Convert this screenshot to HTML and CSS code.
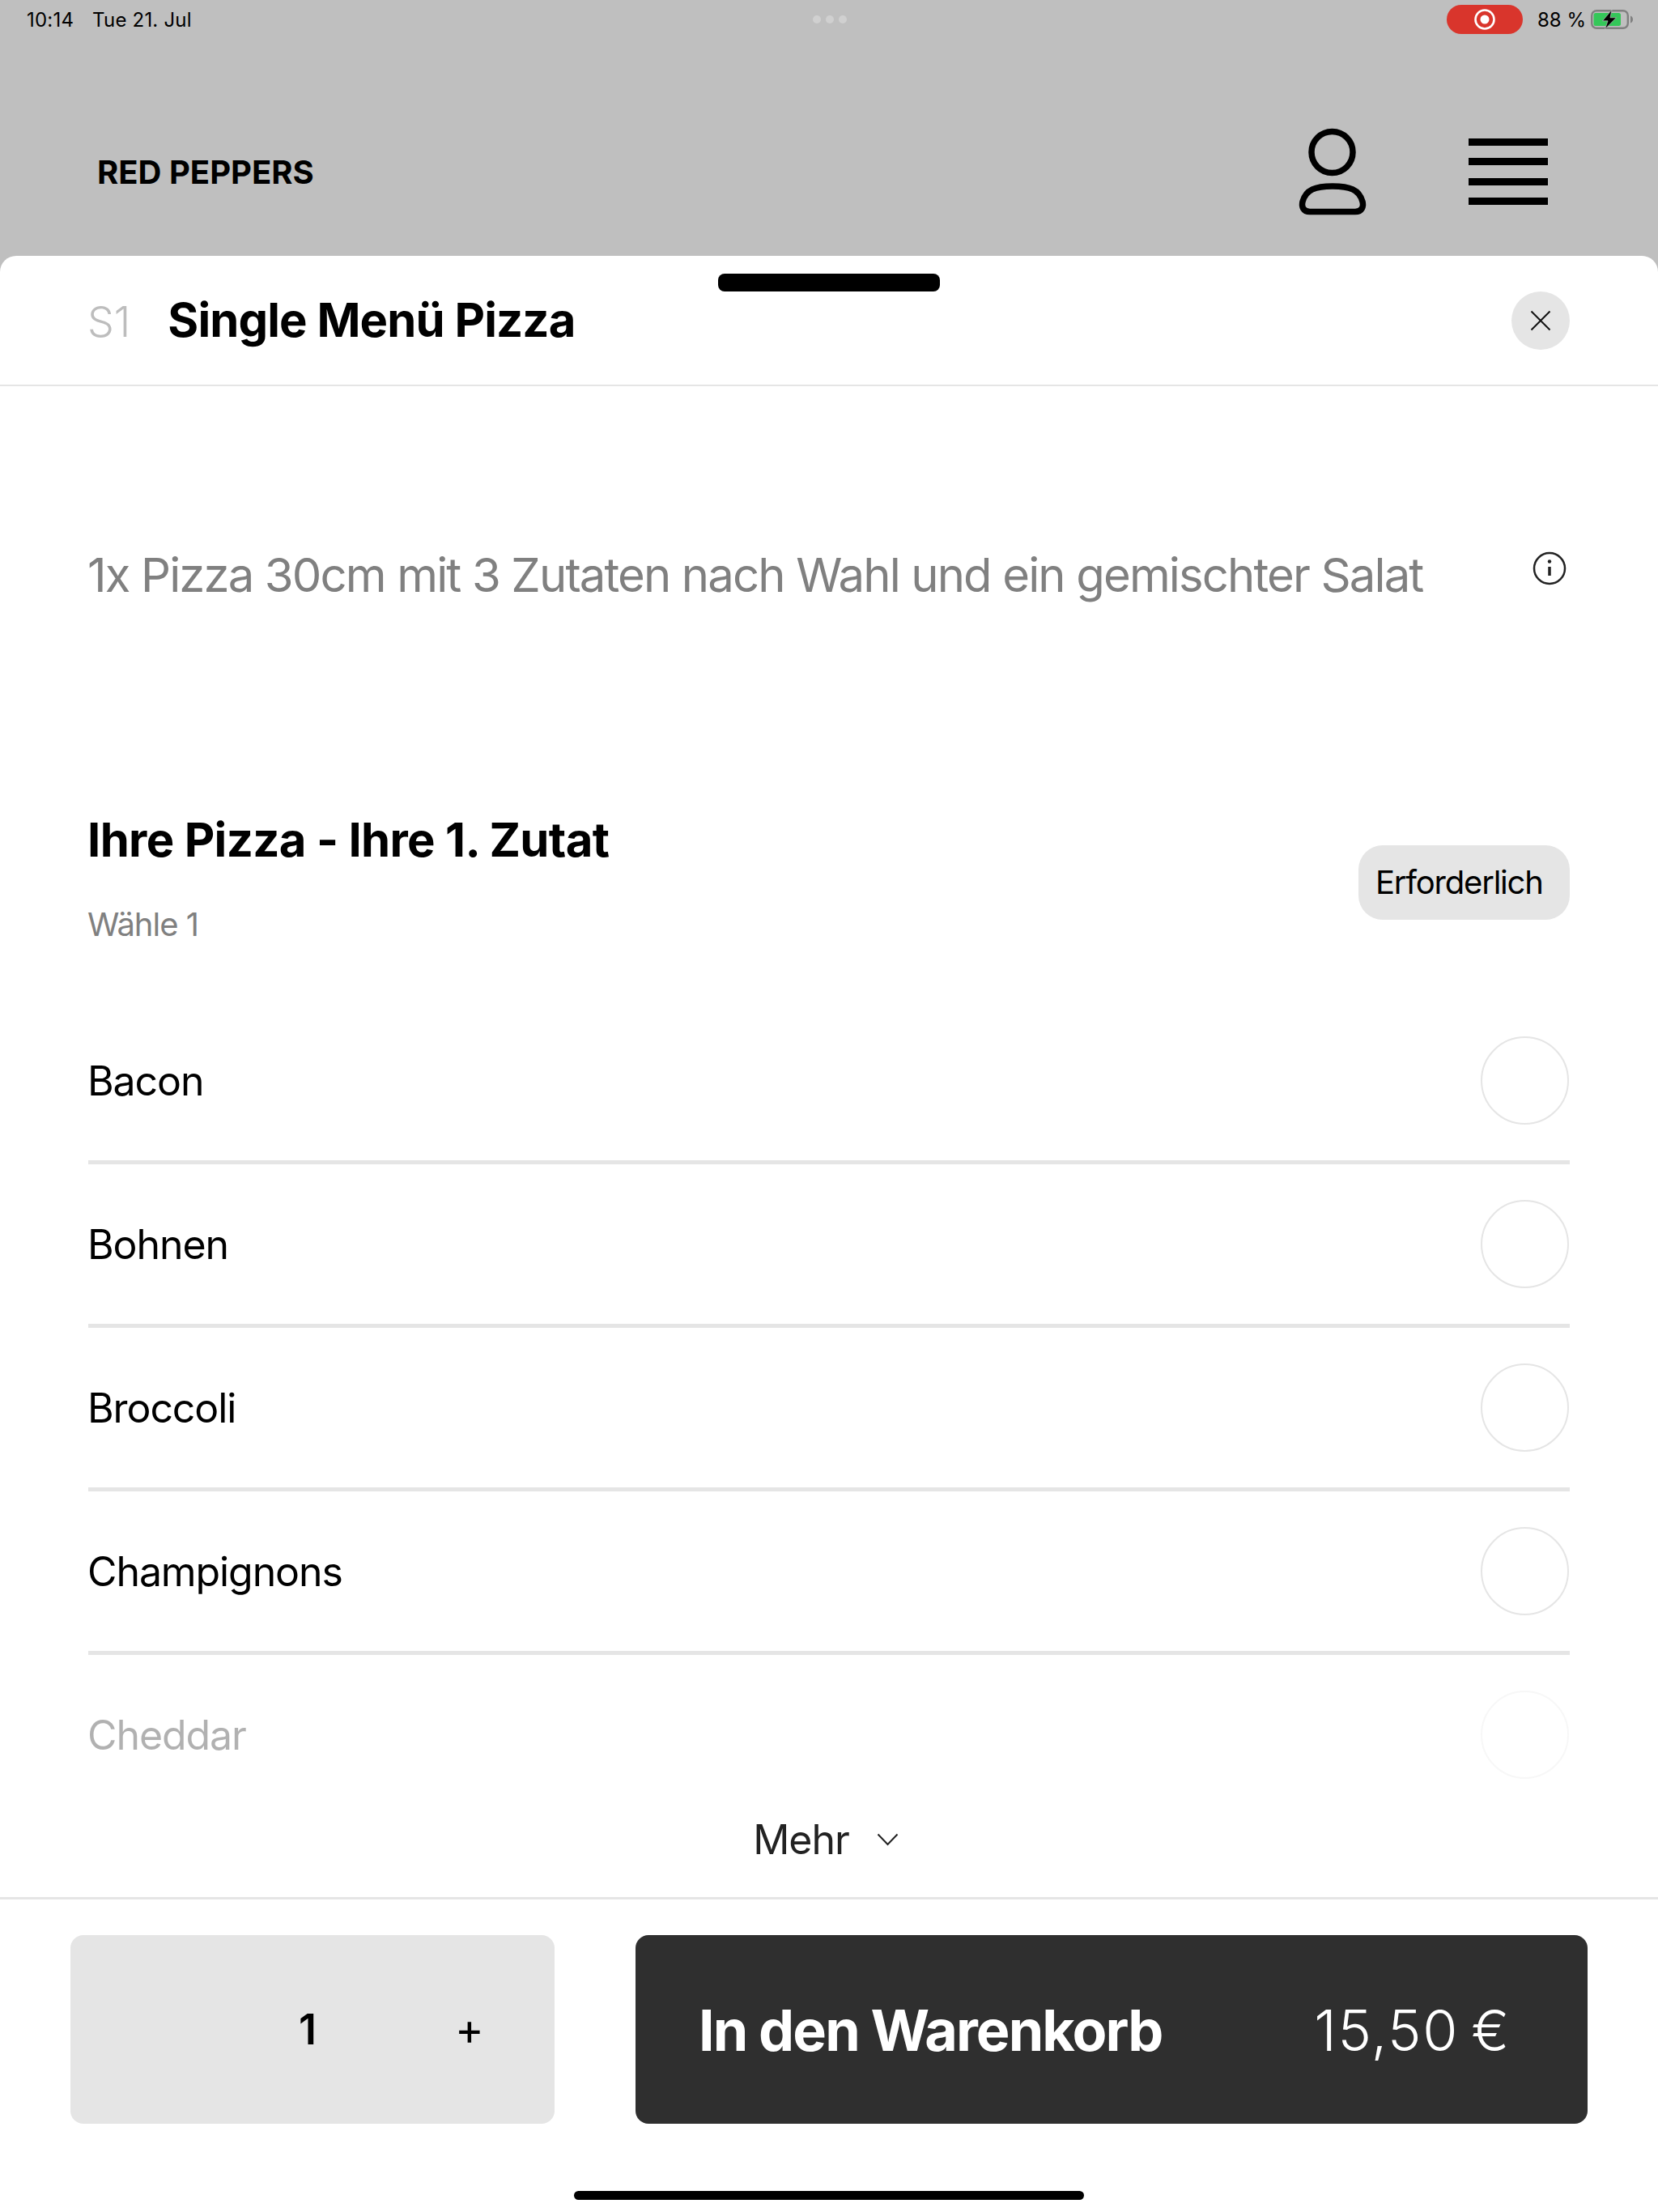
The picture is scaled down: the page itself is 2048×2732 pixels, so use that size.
FILE: index.html
```html
<!DOCTYPE html>
<html lang="de">
  <head>
    <meta charset="utf-8">
    <title>Red Peppers</title>
    <link rel="stylesheet" href="styles.css">
  </head>
  <body>
    <div class="backdrop">
      <div class="status-bar">
        <div class="status-left"><span>10:14</span><span>Tue 21. Jul</span></div>
        <div class="status-dots"><i></i><i></i><i></i></div>
        <div class="status-right">
          <span class="rec-pill">
            <svg width="26" height="26" viewBox="0 0 26 26"><circle cx="13" cy="13" r="11.5" fill="none" stroke="#fff" stroke-width="2.6"/><circle cx="13" cy="13" r="5.5" fill="#fff"/></svg>
          </span>
          <span class="battery-text">88 %</span>
          <svg class="battery" width="52" height="24" viewBox="0 0 52 24">
            <rect x="1.2" y="1.2" width="44.600" height="21.600" rx="6" fill="none" stroke="#808080" stroke-width="2.400"/>
            <rect x="3.500" y="4" width="33.500" height="16" rx="2.500" fill="#34c759"/>
            <path d="M49 7.500c2 .8 3 2.500 3 4.500s-1 3.700-3 4.500z" fill="#808080"/>
            <path d="M26 0 14.500 13.800h6.500L17.500 24 31.500 9.800h-7.500z" fill="#000" stroke="#bfbfbf" stroke-width=".7"/>
          </svg>
        </div>
      </div>
      <header class="site-header">
        <div class="brand">RED PEPPERS</div>
        <div class="header-icons">
          <svg width="84" height="108" viewBox="0 0 84 108" fill="none" stroke="#000" stroke-width="7.500">
            <circle cx="41.500" cy="30" r="25.500"/>
            <path d="M42 72c-21 0-33 4-37 19-1.500 6 .5 12.500 9 12.500h56c8.500 0 10.500-6.500 9-12.500-4-15-16-19-37-19z"/>
          </svg>
          <div class="burger"><i></i><i></i><i></i><i></i></div>
        </div>
      </header>
    </div>

    <main class="sheet">
      <div class="handle"></div>
      <div class="sheet-head">
        <div class="sheet-title"><span class="sku">S1</span><h1>Single Menü Pizza</h1></div>
        <button class="close-btn">
          <svg width="26" height="26" viewBox="0 0 26 26" fill="none" stroke="#111" stroke-width="2"><path d="M1.500 1.500 24.500 24.500M24.500 1.500 1.500 24.500"/></svg>
        </button>
      </div>

      <div class="scroll-area">
        <div class="description">
          <p>1x Pizza 30cm mit 3 Zutaten nach Wahl und ein gemischter Salat</p>
          <svg width="42" height="42" viewBox="0 0 42 42" fill="none" stroke="#222" stroke-width="2.500"><circle cx="21" cy="21" r="19"/><path d="M21 19v11" stroke-width="3.500"/><circle cx="21" cy="12.500" r="2.200" fill="#222" stroke="none"/></svg>
        </div>

        <section class="group-head">
          <div>
            <h2>Ihre Pizza - Ihre 1. Zutat</h2>
            <p>Wähle 1</p>
          </div>
          <span class="required">Erforderlich</span>
        </section>

        <ul class="options">
          <li><span>Bacon</span><i class="radio"></i></li>
          <li><span>Bohnen</span><i class="radio"></i></li>
          <li><span>Broccoli</span><i class="radio"></i></li>
          <li><span>Champignons</span><i class="radio"></i></li>
          <li class="option-faded"><span>Cheddar</span><i class="radio"></i></li>
        </ul>

        <div class="more">
          <span>Mehr</span>
          <svg width="27" height="16" viewBox="0 0 27 16" fill="none" stroke="#222" stroke-width="2"><path d="M1.500 1.500 13.500 14 25.500 1.500"/></svg>
        </div>
      </div>

      <footer class="sheet-foot">
        <div class="foot-actions">
          <div class="qty"><span class="qty-num">1</span><span class="qty-plus">+</span></div>
          <button class="cart-btn"><span class="cart-label">In den Warenkorb</span><span class="cart-price">15,50 €</span></button>
        </div>
        <div class="home-bar"></div>
      </footer>
    </main>
  </body>
</html>
```

FILE: styles.css
```css
* {
  box-sizing: border-box;
}
html, body {
  margin: 0;
  padding: 0;
}
body {
  width: 2048px;
  height: 2732px;
  background-color: #bfbfbf;
  color: #000;
  font-family: 'Inter', 'Liberation Sans', sans-serif;
  display: flex;
  flex-direction: column;
  overflow: hidden;
}
h1, h2, p, ul {
  margin: 0;
  padding: 0;
}
button {
  border: none;
  padding: 0;
  font-family: inherit;
}

/* top area behind the sheet */
.backdrop {
  height: 316px;
  flex: none;
}
.status-bar {
  height: 48px;
  padding: 0 31px 0 33px;
  display: grid;
  grid-template-columns: 1fr auto 1fr;
  align-items: center;
  font-size: 24px;
}
.status-left {
  display: flex;
  gap: 23px;
  letter-spacing: 0.200px;
}
.status-dots {
  display: flex;
  gap: 6px;
}
.status-dots i {
  width: 10px;
  height: 10px;
  border-radius: 50%;
  background-color: #d0d0d0;
}
.status-right {
  display: flex;
  align-items: center;
  justify-content: flex-end;
}
.rec-pill {
  width: 94px;
  height: 36px;
  border-radius: 18px;
  background-color: #d9352c;
  display: flex;
  align-items: center;
  justify-content: center;
  margin-right: 18px;
}
.battery-text {
  margin-right: 6px;
}
.site-header {
  height: 268px;
  padding: 60px 136px 0 120px;
  display: flex;
  align-items: center;
  justify-content: space-between;
}
.brand {
  font-size: 40px;
  font-weight: 700;
}
.header-icons {
  display: flex;
  align-items: center;
  gap: 126px;
}
.burger {
  width: 98px;
  display: flex;
  flex-direction: column;
  gap: 15.500px;
}
.burger i {
  height: 9px;
  background-color: #000;
}

/* sheet */
.sheet {
  flex: 1;
  position: relative;
  background-color: #fff;
  border-radius: 20px 20px 0 0;
  display: flex;
  flex-direction: column;
  min-height: 0;
}
.handle {
  position: absolute;
  top: 22px;
  left: 887px;
  width: 274px;
  height: 22px;
  border-radius: 8px;
  background-color: #000;
}
.sheet-head {
  height: 161px;
  flex: none;
  padding: 0 109px 2px 108px;
  border-bottom: 2px solid #e5e5e5;
  display: flex;
  align-items: center;
  justify-content: space-between;
}
.sheet-title {
  display: flex;
  align-items: baseline;
  gap: 46px;
}
.sku {
  font-size: 52px;
  font-weight: 300;
  color: #bdbdbd;
}
h1 {
  font-size: 58px;
  font-weight: 700;
  letter-spacing: -0.900px;
}
.close-btn {
  width: 72px;
  height: 72px;
  margin-top: 3px;
  border-radius: 50%;
  background-color: #e5e5e5;
  display: flex;
  align-items: center;
  justify-content: center;
}
.scroll-area {
  flex: 1;
  position: relative;
  overflow: hidden;
  min-height: 0;
}
.description {
  height: 466px;
  padding: 204px 113px 0 108px;
  display: flex;
  align-items: flex-start;
  justify-content: space-between;
}
.description p {
  font-size: 58px;
  line-height: 58px;
  color: #808080;
  letter-spacing: -1.860px;
}
.group-head {
  height: 293px;
  padding: 0 109px 0 108px;
  display: flex;
  align-items: flex-start;
  justify-content: space-between;
}
.group-head h2 {
  font-size: 58px;
  line-height: 68px;
  font-weight: 700;
  letter-spacing: -0.650px;
  margin-top: 60px;
}
.group-head p {
  font-size: 40px;
  line-height: 48px;
  color: #808080;
  letter-spacing: -1px;
  margin-top: 47px;
}
.required {
  margin-top: 101px;
  width: 261px;
  height: 92px;
  padding-left: 21px;
  border-radius: 30px;
  background-color: #e5e5e5;
  font-size: 40px;
  line-height: 92px;
  letter-spacing: -1.200px;
}
.options {
  list-style: none;
  padding: 0 109px;
}
.options li {
  height: 202px;
  border-bottom: 5px solid #e5e5e5;
  display: flex;
  align-items: center;
  justify-content: space-between;
  font-size: 50px;
  letter-spacing: -1.100px;
}
.options li span {
  margin-left: -1px;
}
.options li.option-faded {
  opacity: 0.3;
  border-bottom-color: transparent;
}
.radio {
  width: 109px;
  height: 109px;
  margin-right: 1px;
  border-radius: 50%;
  border: 2px solid #e5e5e5;
}
.more {
  position: absolute;
  left: 0;
  right: 0;
  bottom: 41px;
  padding-right: 8px;
  display: flex;
  align-items: center;
  justify-content: center;
  gap: 34px;
  font-size: 50px;
  letter-spacing: -1px;
  color: #222;
}
.sheet-foot {
  height: 389px;
  flex: none;
  border-top: 3px solid #e5e5e5;
  padding-top: 44px;
}
.foot-actions {
  height: 233px;
  padding: 0 87px;
  display: flex;
  gap: 100px;
}
.qty {
  width: 598px;
  padding-left: 282px;
  border-radius: 16px;
  background-color: #e5e5e5;
  display: flex;
  align-items: center;
}
.qty-num {
  width: 193px;
  font-size: 52px;
  font-weight: 600;
}
.qty-plus {
  font-size: 54px;
  margin-top: -3px;
}
.cart-btn {
  flex: 1;
  padding: 1px 95px 0 78px;
  border-radius: 16px;
  background-color: #2f2f2f;
  color: #fff;
  display: flex;
  align-items: center;
  justify-content: space-between;
  font-size: 70px;
}
.cart-label {
  font-weight: 700;
  letter-spacing: -1.900px;
}
.cart-price {
  font-weight: 300;
  letter-spacing: 1.600px;
  word-spacing: -6px;
}
.home-bar {
  width: 630px;
  height: 11px;
  margin: 83px auto 0;
  border-radius: 6px;
  background-color: #000;
}
```
